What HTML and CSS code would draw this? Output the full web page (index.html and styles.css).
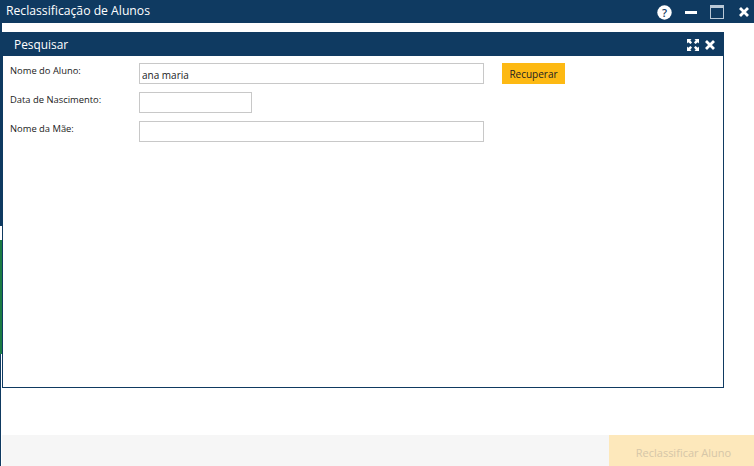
FILE: index.html
```html
<!DOCTYPE html>
<html lang="pt">
<head>
<meta charset="utf-8">
<title>Reclassificação de Alunos</title>
<link rel="stylesheet" href="styles.css">
</head>
<body>
<div class="app">
  <header class="titlebar">
    <span class="title">Reclassificação de Alunos</span>
    <div class="win-icons">
      <svg class="ico" width="15" height="15" viewBox="0 0 15 15"><circle cx="7.500" cy="7.500" r="7.200" fill="#fff"/><text x="7.500" y="11.500" text-anchor="middle" class="q">?</text></svg>
      <svg class="ico" width="12" height="15" viewBox="0 0 12 15"><rect x="0" y="6" width="12" height="3" fill="#fff"/></svg>
      <svg class="ico" width="14" height="14" viewBox="0 0 14 14"><rect x=".5" y=".5" width="13" height="13" fill="none" stroke="#b9c8d6"/><rect x="1" y="1" width="12" height="2" fill="#b9c8d6"/></svg>
      <svg class="ico ico-close" width="10" height="10" viewBox="0 0 10 10"><path d="M1 1l8 8M9 1l-8 8" stroke="#fff" stroke-width="2.800" fill="none"/></svg>
    </div>
  </header>
  <div class="content">
    <div class="edge">
      <div class="edge-blue"></div>
      <div class="edge-gap"></div>
      <div class="edge-green"></div>
      <div class="edge-rest"></div>
    </div>
    <main class="main">
      <section class="dialog">
        <div class="dialog-head">
          <span class="dialog-title">Pesquisar</span>
          <div class="dialog-icons">
            <svg width="12" height="12" viewBox="0 0 12 12"><path d="M0 0h4.500L3.300 1.200 5 3.500 3.500 5 1.200 3.300 0 4.500zM12 0v4.500L10.800 3.300 8.500 5 7 3.500 8.700 1.200 7.500 0zM0 12V7.500L1.200 8.700 3.500 7 5 8.500 3.300 10.800 4.500 12zM12 12H7.500L8.700 10.800 7 8.500 8.500 7 10.800 8.700 12 7.500z" fill="#fff"/></svg>
            <svg width="10" height="10" viewBox="0 0 10 10"><path d="M1 1l8 8M9 1l-8 8" stroke="#fff" stroke-width="2.800" fill="none"/></svg>
          </div>
        </div>
        <form class="form">
          <label class="lbl">Nome do Aluno:</label>
          <div class="field-row">
            <input class="inp inp-long" type="text" value="ana maria">
            <button type="button" class="btn">Recuperar</button>
          </div>
          <label class="lbl">Data de Nascimento:</label>
          <div class="field-row"><input class="inp inp-short" type="text"></div>
          <label class="lbl">Nome da Mãe:</label>
          <div class="field-row"><input class="inp inp-long" type="text"></div>
        </form>
      </section>
      <footer class="footer">
        <button type="button" class="btn-main">Reclassificar Aluno</button>
      </footer>
    </main>
  </div>
</div>
</body>
</html>
```
FILE: styles.css
```css
* { box-sizing: border-box; }
html, body { margin: 0; height: 100%; }
body { background: #fff; font-family: "Open Sans", "Noto Sans", sans-serif; overflow: hidden; }
.app { width: 754px; height: 466px; display: flex; flex-direction: column; }
.titlebar { height: 23px; background: #0f3a61; display: flex; align-items: center; justify-content: space-between; padding: 0 0 0 6px; flex: none; }
.title { color: #fff; font-size: 12.2px; line-height: 20px; margin-top: -2px; }
.win-icons { display: flex; align-items: center; gap: 13px; padding-right: 5px; padding-top: 1px; }
.ico { display: block; }
.ico-close { margin-left: 2px; }
.q { font: 600 11px "Open Sans", sans-serif; fill: #0f3a61; }
.content { flex: 1; display: flex; min-height: 0; }
.edge { width: 2px; flex: none; display: flex; flex-direction: column; }
.edge-blue { height: 203px; background: #0f3a61; }
.edge-gap { height: 14px; background: #fff; }
.edge-green { height: 114px; background: #1a7a43; }
.edge-rest { flex: 1; width: 1px; background: #0f3a61; }
.main { flex: 1; display: flex; flex-direction: column; min-width: 0; padding-top: 9px; }
.dialog { width: 722px; height: 356px; border: 1px solid #0f3a61; border-top: 0; background: #fff; flex: none; }
.dialog-head { height: 24px; margin: 0 -1px; background: #0f3a61; display: flex; align-items: center; justify-content: space-between; padding: 0 9px 0 12px; }
.dialog-title { color: #fff; font-size: 11.9px; }
.dialog-icons { display: flex; align-items: center; gap: 6px; padding-top: 2px; }
.dialog-icons svg { display: block; }
.form { display: grid; grid-template-columns: 129px 1fr; row-gap: 8px; padding: 7px 0 0 7px; }
.lbl { font-size: 9.4px; color: #222; line-height: 14px; padding-top: 1px; }
.field-row { display: flex; align-items: flex-start; }
.inp { height: 21px; border: 1px solid #c8c8c8; background: #fff; padding: 3px 2px 0; font: 10px "Open Sans", sans-serif; color: #222; outline: 0; }
.inp-long { width: 345px; }
.inp-short { width: 113px; }
.btn { width: 63px; height: 21px; margin-left: 18px; border: 0; padding: 0; background: #fdb913; color: #222; font: 10px "Open Sans", sans-serif; }
.footer { margin-top: auto; height: 31px; background: #f6f6f6; display: flex; justify-content: flex-end; flex: none; }
.btn-main { width: 145px; border: 0; padding: 3px 0 0 4px; background: #fde8bb; color: #d5c6a8; font: 11px "Open Sans", sans-serif; }
```
